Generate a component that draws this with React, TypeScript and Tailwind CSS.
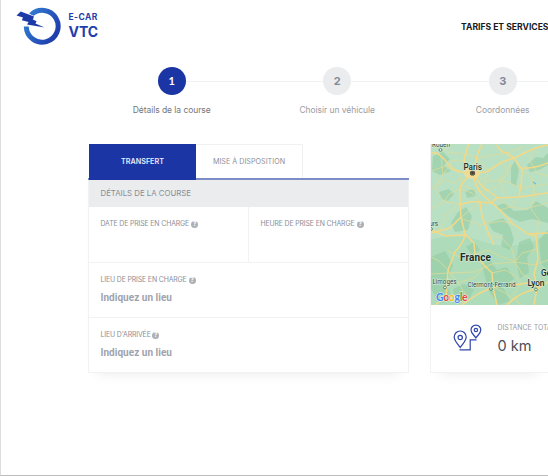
import type { ReactNode } from 'react';

const majorRoads = [
  'M0 9 Q6 8 10 12 T22 25 Q30 29 41 29',
  'M39 28 Q30 17 35 9 Q36 4 38 0',
  'M44 27 Q44 13 51 0',
  'M44 30 L57 27 L71 18 L83 14 L104 4 L117 1',
  'M66 0 Q68 8 76 9 L83 14 L91 26 Q91 39 88 52',
  'M91 24 Q103 25 117 19',
  'M40 31 Q30 38 29 45 L29 60 L30 73 L19 84 L0 89',
  'M42 31 Q45 44 52 51 L61 59 L69 66 L82 80 L97 90 L117 89',
  'M45 33 Q50 43 56 46 L66 53 L61 59',
  'M66 54 L88 53 L117 49',
  'M29 61 Q38 57 49 58 L61 59',
  'M49 58 L51 72 L58 91 L63 101',
  'M30 73 L34 90 L43 99 L44 111 L54 122 L61 129 L62 143 L66 161',
  'M0 86 L15 92 L34 91 Q33 98 24 108 L17 126 L15 153 L4 161',
  'M31 161 L47 150 L62 143 L90 140 L104 138',
  'M97 90 L105 92 L107 115 L103 130 L106 144 L103 161',
  'M76 161 Q88 148 106 145 L117 138',
];

const minorRoads = [
  'M0 46 L13 36 L24 39 L35 33 L41 29 L55 38 L71 36 L91 44 L117 40',
  'M7 0 L17 8 L34 10 L47 14 L63 11 L76 9 L92 3',
  'M0 27 L15 22 L28 29 L31 41 L48 48 L66 43 L77 29 L71 18',
  'M10 12 L12 31 L4 43 L13 58 L29 60 L16 70 L9 86',
  'M91 26 L101 35 L104 50 L100 65 L108 76 L105 92',
  'M66 54 L79 63 L94 65 L117 59 M76 9 L80 24 L69 35 L73 52',
  'M33 17 L22 16 L12 31 M46 14 L57 27 L53 45 M105 4 L98 16 L107 30 L117 32',
  'M29 45 L41 49 L49 58 L38 67 L29 74 L49 81 L70 77 L82 80',
  'M58 91 L71 94 L81 105 L84 118 L104 121 L117 116',
  'M0 130 L17 129 L43 128 L61 120 L84 118 L91 109 L107 105',
  'M17 107 L29 113 L44 111 L57 106 L69 112 L84 118 L91 130 L104 138',
  'M0 113 L8 117 L17 126 L27 139 L34 149 L31 161',
  'M61 129 L74 126 L85 132 L90 140 L82 151 L89 161',
  'M17 141 L29 138 L43 134 L54 122 M62 143 L74 149 L91 161',
  'M0 65 L13 58 L18 50 L29 45 M69 66 L79 63 L88 53',
];

const woods = [
  'M2 12 L12 8 L19 15 L13 21 L20 27 L9 31 L1 27Z',
  'M80 23 L84 17 L88 26 L85 42 L80 39Z',
  'M96 21 L105 13 L112 14 L117 9 L117 21 L108 26 L99 28Z',
  'M27 68 L35 63 L41 72 L37 86 L24 88 L20 79Z',
  'M65 62 L74 59 L83 67 L97 66 L105 57 L117 64 L117 79 L101 75 L89 78 L79 73Z',
  'M57 79 L72 74 L79 83 L83 96 L79 106 L70 102 L72 91 L62 87Z',
  'M0 113 L14 107 L22 121 L15 139 L20 151 L9 159 L0 145Z',
  'M51 121 L58 115 L66 126 L76 123 L83 135 L72 143 L79 157 L67 161 L57 145Z',
  'M88 98 L99 94 L103 103 L96 113 L98 129 L89 134 L85 119Z',
  'M108 96 L117 86 L117 126 L111 121 L109 109Z',
  'M8 48 L18 45 L23 50 L17 57 L10 55Z',
  'M34 47 L43 45 L45 52 L36 54Z',
  'M35 103 L43 98 L49 106 L41 110Z',
  'M22 145 L33 140 L43 146 L36 158 L25 156Z',
];

function FranceMap() {
  return (
    <svg className="block h-[161px] w-[117px] shrink-0" viewBox="0 0 117 161" fontFamily='Roboto, "Liberation Sans", sans-serif'>
      <rect width="117" height="161" fill="#bae0c4" />
      <path d="M0 96 Q24 87 54 98 T117 90 V161 H0Z" fill="#aedbb9" />
      <g fill="#93cda6" opacity=".6">
        {woods.map((d) => <path key={d} d={d} />)}
      </g>
      <g fill="none" stroke="#dedb98" strokeWidth=".8" strokeLinejoin="round">
        {minorRoads.map((d) => <path key={d} d={d} />)}
      </g>
      <ellipse cx="41" cy="29" rx="8" ry="6" fill="#ecdf9d" />
      <g fill="none" stroke="#f3d987" strokeWidth="1.5" strokeLinejoin="round">
        {majorRoads.map((d) => <path key={d} d={d} />)}
      </g>
      <path d="M102 38 l3 2" stroke="#6cb7dc" strokeWidth="1.2" />
      <circle cx="41.5" cy="29" r="2.6" fill="#403e35" />
      <circle cx="41.5" cy="29" r="1.7" fill="none" stroke="#9b9371" strokeWidth=".5" />
      <g fill="#eef3e6" stroke="#475" strokeWidth=".8">
        <circle cx="9.5" cy="6" r="1.4" />
        <circle cx="14" cy="143.5" r="1.4" />
        <circle cx="60" cy="145" r="1.4" />
        <circle cx="105" cy="145.5" r="1.4" />
        <circle cx="0" cy="85" r="1.4" />
      </g>
      <g fill="#31443b" stroke="#d7eddc" strokeWidth="1" paintOrder="stroke" fontSize="6.4">
        <text x="1" y="3" textLength="18">Rouen</text>
        <text x="-9" y="82">Tours</text>
        <text x="1.5" y="140" textLength="24">Limoges</text>
        <text x="36.5" y="142.5" textLength="48">Clermont-Ferrand</text>
      </g>
      <g fill="#202c29" stroke="#d7eddc" strokeWidth="1" paintOrder="stroke" fontWeight="500">
        <text x="32.5" y="25.5" fontSize="8.2" textLength="18.5">Paris</text>
        <text x="29" y="117.3" fontSize="10" fontWeight="700" textLength="31">France</text>
        <text x="96.5" y="142" fontSize="8.4" textLength="17">Lyon</text>
        <text x="110" y="132" fontSize="8.2">Geneva</text>
      </g>
      <text x="5" y="156.5" fontSize="10.5" fontWeight="700" textLength="31.5" stroke="#eef6f0" strokeWidth="1" paintOrder="stroke" fontFamily="Lato, sans-serif">
        <tspan fill="#4285f4">G</tspan><tspan fill="#ea4335">o</tspan><tspan fill="#fbbc05">o</tspan>
        <tspan fill="#4285f4">g</tspan><tspan fill="#34a853">l</tspan><tspan fill="#ea4335">e</tspan>
      </text>
    </svg>
  );
}

function Logo() {
  return (
    <svg className="h-[40px] w-[48px] shrink-0" viewBox="0 0 48 40">
      <defs>
        <linearGradient id="ring" x1="0" y1="0" x2="1" y2=".6">
          <stop offset="0" stopColor="#3482d6" />
          <stop offset="1" stopColor="#203fae" />
        </linearGradient>
      </defs>
      <path d="M16 9 A15.9 15.9 0 1 1 11.3 20.5" fill="none" stroke="url(#ring)" strokeWidth="5" />
      <path d="M5.7 5.6 L19 10.6 L17.9 13.6 L21.6 15.2 L20.4 17.5 L29.5 21.4 L12 18.4 L13.6 16 L6.8 14.2 L8 11.5 L1.5 9.6Z" fill="#1c3ba8" stroke="#fff" strokeWidth="1.6" paintOrder="stroke" />
    </svg>
  );
}

function Help() {
  return (
    <span className="flex h-[7px] w-[7px] shrink-0 items-center justify-center rounded-full bg-[#adb0b6] text-[6px] leading-none font-bold text-white">?</span>
  );
}

function Label({ children, width }: { children: ReactNode; width: string }) {
  return (
    <div className="flex h-[10px] items-center gap-[2px] text-[6.9px] leading-[10px] tracking-[-0.13px] whitespace-nowrap text-[#8b8f99]">
      <span className={`${width} shrink-0`}>{children}</span>
      <Help />
    </div>
  );
}

function Step({ n, label, active = false }: { n: number; label: string; active?: boolean }) {
  return (
    <div className="flex w-[100px] shrink-0 flex-col items-center">
      <div className={`flex h-[28px] w-[28px] items-center justify-center rounded-full text-[11px] font-bold ${active ? 'bg-[#1b36a4] text-white [font-family:Lato,sans-serif]' : 'bg-[#ebecee] text-[#838997]'}`}>{n}</div>
      <div className={`mt-[9px] text-[8.5px] leading-[12px] tracking-[-0.05px] whitespace-nowrap ${active ? 'text-[#74777c]' : 'text-[#9a9da5]'}`}>{label}</div>
    </div>
  );
}

function Connector() {
  return <div className="-mx-[36px] mt-[14px] h-px w-[137.5px] shrink-0 bg-[#f0f1f2]" />;
}

function PlaceField({ label, width }: { label: string; width: string }) {
  return (
    <div className="h-[55px] border-b border-[#f1f2f3] pt-[12px] pl-[11.5px]">
      <Label width={width}>{label}</Label>
      <div className="mt-[7px] text-[10px] leading-[12px] font-bold tracking-[0.03px] text-[#a0a3ae] [font-family:Roboto,sans-serif]">Indiquez un lieu</div>
    </div>
  );
}

export default function App() {
  return (
    <div className="h-[476px] w-[548px] overflow-hidden border-b border-l border-b-[#bdbdbd] border-l-[#dcdcdc] bg-white [font-family:Inter,sans-serif]">
      <header className="flex h-[67px] pt-[6px] pl-[14px]">
        <Logo />
        <div className="ml-[5.5px] pt-[6px] leading-none font-bold text-[#1f3dac]">
          <div className="text-[8.5px] leading-[11px] tracking-[0.45px]">E-CAR</div>
          <div className="text-[14px] leading-[17px]">VTC</div>
        </div>
        <div className="ml-auto w-[87px] shrink-0 pt-[15px] text-[8.6px] leading-[12px] font-bold whitespace-nowrap text-[#161a22]">TARIFS ET SERVICES</div>
      </header>

      <nav className="flex h-[77px] pl-[120.7px]">
        <Step n={1} label="Détails de la course" active />
        <Connector />
        <Step n={2} label="Choisir un véhicule" />
        <Connector />
        <Step n={3} label="Coordonnées" />
        <Connector />
      </nav>

      <main className="flex items-start gap-[21px] pl-[87px]">
        <section className="h-[229px] w-[321px] shrink-0 shadow-[0_10px_12px_-10px_#00000018]">
          <div className="flex h-[36px] border-b-2 border-[#7d8bc7] text-[7.2px] leading-none">
            <div className="ml-[1px] flex h-[36px] w-[107px] items-center justify-center bg-[#1b36a4] font-semibold text-[#e9ecff]">TRANSFERT</div>
            <div className="flex h-[34px] w-[107px] items-center justify-center border-t border-r border-[#f0f1f2] whitespace-nowrap text-[#8d909a]">MISE À DISPOSITION</div>
          </div>
          <div className="h-[193px] border-x border-[#f1f2f3]">
            <div className="flex h-[27px] items-center bg-[#ebecee] pl-[11.5px] text-[7.8px] leading-none text-[#898d96]">DÉTAILS DE LA COURSE</div>
            <div className="flex h-[56px] border-b border-[#f1f2f3]">
              <div className="w-[160px] border-r border-[#f1f2f3] pt-[12px] pl-[11.5px]">
                <Label width="w-[88.5px]">DATE DE PRISE EN CHARGE</Label>
              </div>
              <div className="pt-[12px] pl-[11.5px]">
                <Label width="w-[94px]">HEURE DE PRISE EN CHARGE</Label>
              </div>
            </div>
            <PlaceField label="LIEU DE PRISE EN CHARGE" width="w-[86px]" />
            <PlaceField label="LIEU D'ARRIVÉE" width="w-[49.5px]" />
          </div>
        </section>

        <aside className="h-[229px] w-[118px] shrink-0 border-b border-l border-[#f1f2f3] shadow-[0_10px_12px_-10px_#00000018]">
          <FranceMap />
          <div className="flex h-[67px] pt-[18px] pl-[22px]">
            <svg className="h-[30px] w-[29px] shrink-0" viewBox="0 0 29 30" fill="none" stroke="#2f45aa" strokeWidth="1.2">
              <path d="M7.2 24.5 C4.7 20.5 1.2 17.8 1.2 14 A6 6 0 0 1 13.2 14 C13.2 17.8 9.7 20.5 7.2 24.5Z" />
              <circle cx="7.2" cy="14.5" r="2.2" />
              <path d="M22.9 15 C21 12 18 10 18 7 A4.9 4.9 0 0 1 27.8 7 C27.8 10 24.8 12 22.9 15Z" />
              <circle cx="22.9" cy="7" r="1.7" />
              <path d="M6.5 26.8 H17.2 V16.8 H23.5" />
            </svg>
            <div className="ml-[15.5px] whitespace-nowrap">
              <div className="text-[6.9px] leading-[10px] text-[#989ba3]">DISTANCE TOTALE</div>
              <div className="mt-[3px] text-[14.5px] leading-[20px] text-[#4c5058]">0 km</div>
            </div>
          </div>
        </aside>
      </main>
    </div>
  );
}
